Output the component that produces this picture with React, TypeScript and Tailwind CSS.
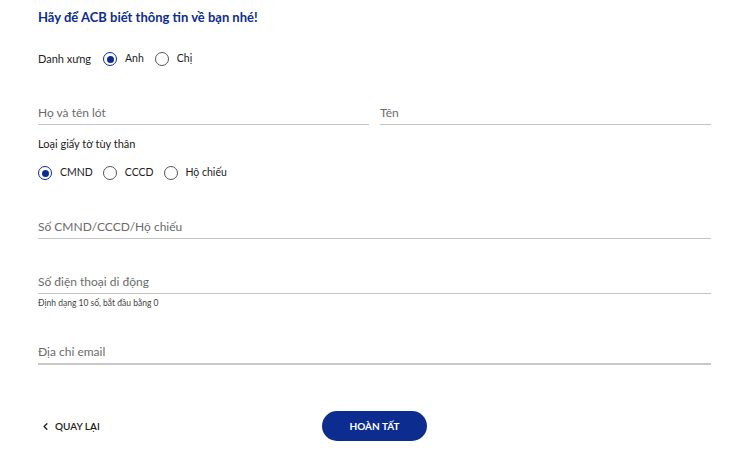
import { ChevronLeft } from 'lucide-react';

const font = { fontFamily: 'Lato, "Open Sans", sans-serif' };

function Radio({ checked, label }: { checked?: boolean; label: string }) {
  return (
    <label className="flex items-center gap-[8px] text-[10.5px] text-[#222]">
      <span
        className={`flex h-[14px] w-[14px] items-center justify-center rounded-full border-[1.5px] ${
          checked ? 'border-[#0d2c8f]' : 'border-[#555]'
        }`}
      >
        {checked && <span className="h-[7px] w-[7px] rounded-full bg-[#0d2c8f]" />}
      </span>
      {label}
    </label>
  );
}

function Field({ placeholder, className = '' }: { placeholder: string; className?: string }) {
  return (
    <div className={`flex h-[24px] items-center border-b border-[#c4c4c4] ${className}`}>
      <span className="text-[12px] text-[#6b6b6b]">{placeholder}</span>
    </div>
  );
}

export default function App() {
  return (
    <div className="min-h-[469px] w-[750px] bg-white pl-[38px] pr-[39px] pt-[9px]" style={font}>
      <h1 className="text-[13px] font-bold leading-[16px] text-[#0d2c8f]">
        Hãy để ACB biết thông tin về bạn nhé!
      </h1>

      {/* Danh xưng */}
      <div className="mt-[24px] flex h-[20px] items-center">
        <span className="w-[65px] text-[11px] text-[#222]">Danh xưng</span>
        <div className="flex items-center gap-[11px]">
          <Radio checked label="Anh" />
          <Radio label="Chị" />
        </div>
      </div>

      {/* Họ tên */}
      <div className="mt-[32px] flex gap-[11px]">
        <Field placeholder="Họ và tên lót" className="flex-1" />
        <Field placeholder="Tên" className="flex-1" />
      </div>

      <div className="mt-[11px] text-[11px] leading-[16px] text-[#222]">Loại giấy tờ tùy thân</div>

      <div className="mt-[11px] flex h-[20px] items-center gap-[10px]">
        <Radio checked label="CMND" />
        <Radio label="CCCD" />
        <Radio label="Hộ chiếu" />
      </div>

      <Field placeholder="Số CMND/CCCD/Hộ chiếu" className="mt-[32px]" />

      <Field placeholder="Số điện thoại di động" className="mt-[31px]" />
      <div className="mt-[3px] text-[8.5px] leading-[12px] text-[#444]">Định dạng 10 số, bắt đầu bằng 0</div>

      <div className="mt-[32px] flex h-[24px] items-center border-b-2 border-[#c8c8c8]">
        <span className="text-[12px] text-[#6b6b6b]">Địa chỉ email</span>
      </div>

      {/* Actions */}
      <div className="mt-[46px] flex items-center">
        <button className="flex w-[284px] items-center gap-[4px] pl-[2px] text-[10px] font-semibold text-[#222]">
          <ChevronLeft className="h-[11px] w-[11px]" strokeWidth={3} />
          QUAY LẠI
        </button>
        <button className="h-[30px] w-[105px] rounded-full bg-[#0d2c8f] text-[10px] font-bold text-white">
          HOÀN TẤT
        </button>
      </div>
    </div>
  );
}
